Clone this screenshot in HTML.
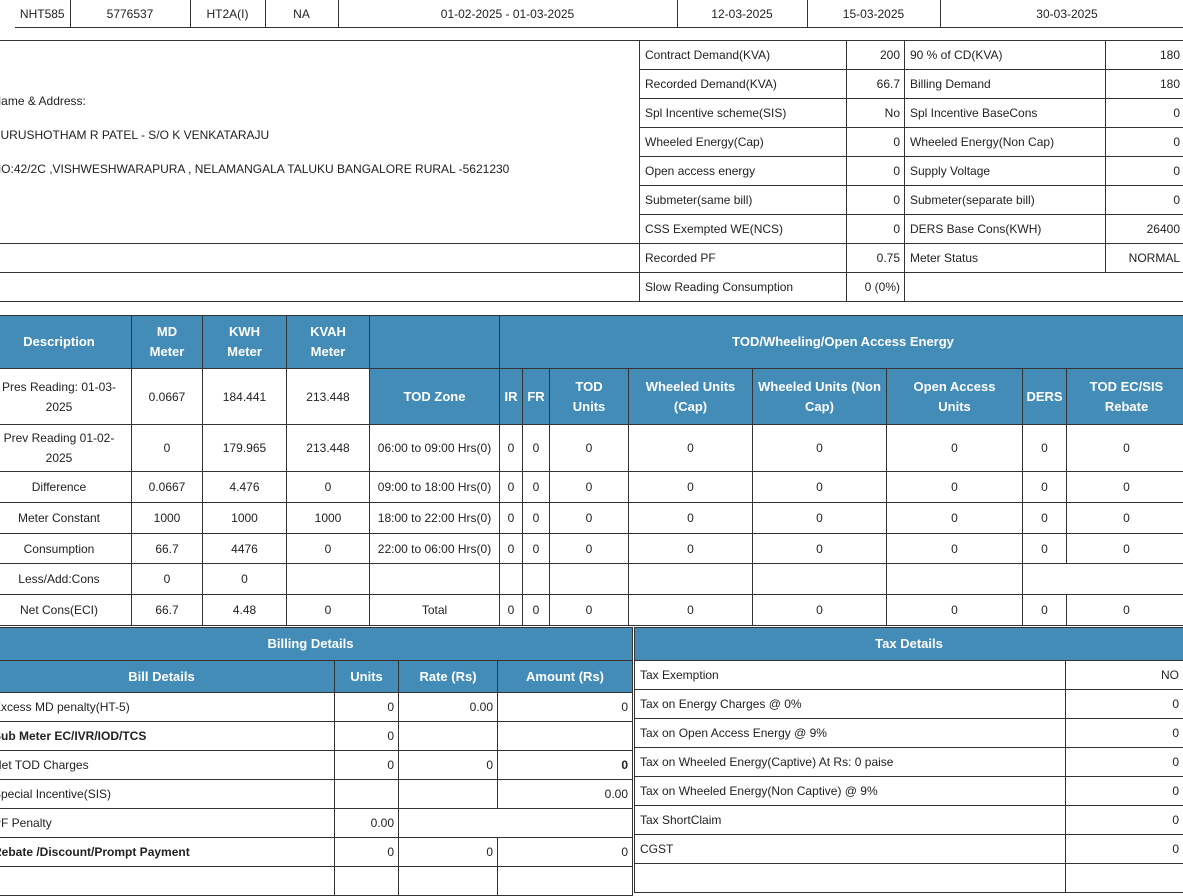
<!DOCTYPE html>
<html><head><meta charset="utf-8">
<style>
*{box-sizing:border-box;margin:0;padding:0}
body{width:1183px;height:870px;overflow:hidden;background:#fff;font-family:"Liberation Sans",sans-serif;font-size:12px;color:#222;position:relative}
table{border-collapse:collapse;table-layout:fixed;position:absolute}
td,th{border:1px solid #333;overflow:hidden;white-space:nowrap}
th{background:#438cb8;color:#fff;font-weight:bold;font-size:13px;text-align:center;line-height:20px;white-space:normal}
.c td{text-align:center}
.r{text-align:right;padding-right:4px}
.l{text-align:left;padding-left:5px}
.b{font-weight:bold}
</style></head><body>

<table style="left:15px;top:-1px;width:1179px" class="c">
<colgroup><col style="width:55px"><col style="width:120px"><col style="width:75px"><col style="width:73px"><col style="width:339px"><col style="width:130px"><col style="width:133px"><col style="width:254px"></colgroup>
<tr style="height:28px"><td style="border-left:none">NHT585</td><td>5776537</td><td>HT2A(I)</td><td>NA</td><td>01-02-2025 - 01-03-2025</td><td>12-03-2025</td><td>15-03-2025</td><td>30-03-2025</td></tr>
</table>

<table style="left:-8px;top:40px;width:1192px">
<colgroup><col style="width:647px"><col style="width:207px"><col style="width:58px"><col style="width:201px"><col style="width:79px"></colgroup>
<tr style="height:29px"><td rowspan="7" style="border-left:none;vertical-align:top;padding-top:43px;line-height:34px">Name &amp; Address:<br>PURUSHOTHAM R PATEL - S/O K VENKATARAJU<br>NO:42/2C ,VISHWESHWARAPURA , NELAMANGALA TALUKU BANGALORE RURAL -5621230</td><td class="l">Contract Demand(KVA)</td><td class="r">200</td><td class="l">90 % of CD(KVA)</td><td class="r">180</td></tr>
<tr style="height:29px"><td class="l">Recorded Demand(KVA)</td><td class="r">66.7</td><td class="l">Billing Demand</td><td class="r">180</td></tr>
<tr style="height:29px"><td class="l">Spl Incentive scheme(SIS)</td><td class="r">No</td><td class="l">Spl Incentive BaseCons</td><td class="r">0</td></tr>
<tr style="height:29px"><td class="l">Wheeled Energy(Cap)</td><td class="r">0</td><td class="l">Wheeled Energy(Non Cap)</td><td class="r">0</td></tr>
<tr style="height:29px"><td class="l">Open access energy</td><td class="r">0</td><td class="l">Supply Voltage</td><td class="r">0</td></tr>
<tr style="height:29px"><td class="l">Submeter(same bill)</td><td class="r">0</td><td class="l">Submeter(separate bill)</td><td class="r">0</td></tr>
<tr style="height:29px"><td class="l">CSS Exempted WE(NCS)</td><td class="r">0</td><td class="l">DERS Base Cons(KWH)</td><td class="r">26400</td></tr>
<tr style="height:29px"><td></td><td class="l">Recorded PF</td><td class="r">0.75</td><td class="l">Meter Status</td><td class="r">NORMAL</td></tr>
<tr style="height:29px"><td></td><td class="l">Slow Reading Consumption</td><td class="r">0 (0%)</td><td colspan="2" style="border-right:none"></td></tr>
</table>

<table style="left:-14px;top:315px;width:1200px" class="c">
<colgroup><col style="width:145px"><col style="width:71px"><col style="width:84px"><col style="width:83px"><col style="width:130px"><col style="width:23px"><col style="width:27px"><col style="width:79px"><col style="width:124px"><col style="width:134px"><col style="width:136px"><col style="width:44px"><col style="width:120px"></colgroup>
<tr style="height:53px"><th>Description</th><th>MD<br>Meter</th><th>KWH<br>Meter</th><th>KVAH<br>Meter</th><th></th><th colspan="8">TOD/Wheeling/Open Access Energy</th></tr>
<tr style="height:56px"><td style="line-height:20px">Pres Reading: 01-03-<br>2025</td><td>0.0667</td><td>184.441</td><td>213.448</td><th>TOD Zone</th><th>IR</th><th>FR</th><th>TOD<br>Units</th><th>Wheeled Units<br>(Cap)</th><th>Wheeled Units (Non<br>Cap)</th><th>Open Access<br>Units</th><th>DERS</th><th>TOD EC/SIS<br>Rebate</th></tr>
<tr style="height:47px"><td style="line-height:20px">Prev Reading 01-02-<br>2025</td><td>0</td><td>179.965</td><td>213.448</td><td>06:00 to 09:00 Hrs(0)</td><td>0</td><td>0</td><td>0</td><td>0</td><td>0</td><td>0</td><td>0</td><td>0</td></tr>
<tr style="height:31px"><td>Difference</td><td>0.0667</td><td>4.476</td><td>0</td><td>09:00 to 18:00 Hrs(0)</td><td>0</td><td>0</td><td>0</td><td>0</td><td>0</td><td>0</td><td>0</td><td>0</td></tr>
<tr style="height:31px"><td>Meter Constant</td><td>1000</td><td>1000</td><td>1000</td><td>18:00 to 22:00 Hrs(0)</td><td>0</td><td>0</td><td>0</td><td>0</td><td>0</td><td>0</td><td>0</td><td>0</td></tr>
<tr style="height:30px"><td>Consumption</td><td>66.7</td><td>4476</td><td>0</td><td>22:00 to 06:00 Hrs(0)</td><td>0</td><td>0</td><td>0</td><td>0</td><td>0</td><td>0</td><td>0</td><td>0</td></tr>
<tr style="height:31px"><td>Less/Add:Cons</td><td>0</td><td>0</td><td></td><td></td><td></td><td></td><td></td><td></td><td></td><td></td><td colspan="2"></td></tr>
<tr style="height:31px"><td>Net Cons(ECI)</td><td>66.7</td><td>4.48</td><td>0</td><td>Total</td><td>0</td><td>0</td><td>0</td><td>0</td><td>0</td><td>0</td><td>0</td><td>0</td></tr>
</table>

<table style="left:-12px;top:627px;width:644px">
<colgroup><col style="width:346px"><col style="width:64px"><col style="width:99px"><col style="width:135px"></colgroup>
<tr style="height:33px"><th colspan="4">Billing Details</th></tr>
<tr style="height:32px"><th>Bill Details</th><th>Units</th><th>Rate (Rs)</th><th>Amount (Rs)</th></tr>
<tr style="height:29px"><td class="l" style="padding-left:4px">Excess MD penalty(HT-5)</td><td class="r">0</td><td class="r">0.00</td><td class="r">0</td></tr>
<tr style="height:29px"><td class="l b" style="padding-left:4px">Sub Meter EC/IVR/IOD/TCS</td><td class="r">0</td><td></td><td></td></tr>
<tr style="height:29px"><td class="l" style="padding-left:4px">Net TOD Charges</td><td class="r">0</td><td class="r">0</td><td class="r b">0</td></tr>
<tr style="height:29px"><td class="l" style="padding-left:4px">Special Incentive(SIS)</td><td></td><td></td><td class="r">0.00</td></tr>
<tr style="height:29px"><td class="l" style="padding-left:4px">PF Penalty</td><td class="r">0.00</td><td colspan="2"></td></tr>
<tr style="height:29px"><td class="l b" style="padding-left:4px">Rebate /Discount/Prompt Payment</td><td class="r">0</td><td class="r">0</td><td class="r">0</td></tr>
<tr style="height:29px"><td></td><td></td><td></td><td></td></tr>
</table>

<table style="left:634px;top:627px;width:549px">
<colgroup><col style="width:431px"><col style="width:118px"></colgroup>
<tr style="height:33px"><th colspan="2">Tax Details</th></tr>
<tr style="height:29px"><td class="l">Tax Exemption</td><td class="r">NO</td></tr>
<tr style="height:29px"><td class="l">Tax on Energy Charges @ 0%</td><td class="r">0</td></tr>
<tr style="height:29px"><td class="l">Tax on Open Access Energy @ 9%</td><td class="r">0</td></tr>
<tr style="height:29px"><td class="l">Tax on Wheeled Energy(Captive) At Rs: 0 paise</td><td class="r">0</td></tr>
<tr style="height:29px"><td class="l">Tax on Wheeled Energy(Non Captive) @ 9%</td><td class="r">0</td></tr>
<tr style="height:29px"><td class="l">Tax ShortClaim</td><td class="r">0</td></tr>
<tr style="height:29px"><td class="l">CGST</td><td class="r">0</td></tr>
<tr style="height:29px"><td></td><td></td></tr>
</table>
</body></html>
